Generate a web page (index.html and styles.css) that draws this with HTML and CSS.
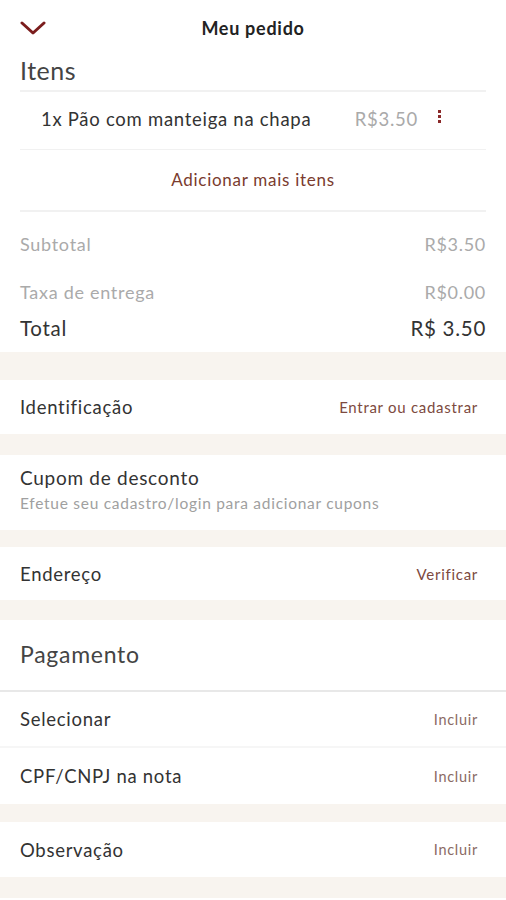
FILE: index.html
```html
<!DOCTYPE html>
<html lang="pt-BR">
<head>
  <meta charset="UTF-8" />
  <meta name="viewport" content="width=device-width, initial-scale=1.0"/>
  <title>Meu pedido</title>
  <link rel="stylesheet" href="styles.css">
</head>
<body>
  <header class="topbar">
    <svg class="back" width="26" height="14" viewBox="0 0 26 14">
      <path d="M2 2 L13 12 L24 2" fill="none" stroke="#7b1d1d" stroke-width="3" stroke-linecap="round" stroke-linejoin="round"/>
    </svg>
    <h1>Meu pedido</h1>
  </header>

  <section class="block items">
    <h2 class="items-title">Itens</h2>
    <div class="item-row">
      <span class="item-name">1x Pão com manteiga na chapa</span>
      <span class="item-price">R$3.50</span>
      <span class="kebab"><i></i><i></i><i></i></span>
    </div>
    <div class="add-more">Adicionar mais itens</div>
    <div class="sum-row muted first"><span>Subtotal</span><span>R$3.50</span></div>
    <div class="sum-row muted"><span>Taxa de entrega</span><span>R$0.00</span></div>
    <div class="sum-row total"><span>Total</span><span>R$ 3.50</span></div>
  </section>

  <div class="gap gap-tall"></div>

  <section class="block row">
    <span class="label">Identificação</span>
    <span class="action">Entrar ou cadastrar</span>
  </section>

  <div class="gap"></div>

  <section class="block coupon">
    <div class="label">Cupom de desconto</div>
    <div class="hint">Efetue seu cadastro/login para adicionar cupons</div>
  </section>

  <div class="gap gap-short"></div>

  <section class="block row address">
    <span class="label">Endereço</span>
    <span class="action">Verificar</span>
  </section>

  <div class="gap gap-mid"></div>

  <section class="block payment">
    <h2 class="pay-title">Pagamento</h2>
    <div class="row line">
      <span class="label">Selecionar</span>
      <span class="action small">Incluir</span>
    </div>
    <div class="row">
      <span class="label">CPF/CNPJ na nota</span>
      <span class="action small">Incluir</span>
    </div>
  </section>

  <div class="gap gap-note"></div>

  <section class="block row note">
    <span class="label">Observação</span>
    <span class="action small">Incluir</span>
  </section>

  <div class="gap"></div>
</body>
</html>
```

FILE: styles.css
```css
body {
  margin: 0;
  font-family: 'Lato', 'Open Sans', sans-serif;
  letter-spacing: 0.045em;
  background: #fff;
  color: #333;
}

.topbar {
  height: 56px;
  display: flex;
  align-items: center;
  justify-content: center;
  position: relative;
}

.back {
  position: absolute;
  left: 20px;
  top: 21px;
}

.topbar h1 {
  margin: 0;
  font-size: 18px;
  font-weight: 700;
  color: #222;
}

.block {
  background: #fff;
}

.items {
  padding: 0 20px;
}

.items-title {
  margin: 0;
  font-size: 25px;
  font-weight: 400;
  letter-spacing: 0.02em;
  color: #444;
  height: 34px;
  line-height: 28px;
  border-bottom: 2px solid #f1f1f1;
}

.item-row {
  display: flex;
  align-items: center;
  height: 53px;
  padding: 0 0 4px 21px;
  border-bottom: 1px solid #f1f1f1;
  font-size: 18.5px;
}

.item-name {
  flex: 1;
  color: #333;
}

.item-price {
  color: #aaa;
}

.kebab {
  display: flex;
  flex-direction: column;
  gap: 2px;
  margin: 0 45px 4px 20px;
}

.kebab i {
  display: block;
  width: 3px;
  height: 3px;
  background: #8b2a2a;
}

.add-more {
  height: 60px;
  line-height: 59px;
  text-align: center;
  color: #7a3b2e;
  font-size: 17px;
  border-bottom: 2px solid #f1f1f1;
}

.sum-row {
  display: flex;
  justify-content: space-between;
}

.sum-row.muted {
  color: #aaa;
  font-size: 18px;
  height: 48px;
  align-items: center;
}

.sum-row.first {
  margin-top: 8px;
}

.sum-row.total {
  color: #333;
  font-size: 20.5px;
  line-height: 24px;
  height: 24px;
  padding-bottom: 12px;
}

.gap {
  height: 21px;
  background: #f8f4ef;
}

.gap-tall {
  height: 28px;
}

.gap-short {
  height: 17px;
}

.gap-mid {
  height: 20px;
}

.gap-note {
  height: 18px;
}

.row {
  display: flex;
  justify-content: space-between;
  align-items: center;
  height: 54px;
  padding: 0 28px 0 20px;
}

.row.address {
  height: 53px;
}

.row.note {
  height: 55px;
}

.label {
  font-size: 18.5px;
  color: #333;
}

.action {
  font-size: 15px;
  color: #7d4a40;
}

.action.small {
  font-size: 14.5px;
  color: #8a6a64;
}

.coupon {
  padding: 11px 20px 0;
  height: 75px;
  box-sizing: border-box;
}

.coupon .label {
  font-size: 19px;
  line-height: 24px;
}

.hint {
  font-size: 15.5px;
  color: #a0a0a0;
  margin-top: 4px;
}

.pay-title {
  margin: 0;
  font-size: 23px;
  font-weight: 400;
  color: #444;
  height: 70px;
  line-height: 68px;
  padding-left: 20px;
  border-bottom: 2px solid #e8e8e8;
}

.payment .row {
  height: 56px;
}

.payment .row.line {
  height: 54px;
  border-bottom: 2px solid #f6f6f6;
}
```
